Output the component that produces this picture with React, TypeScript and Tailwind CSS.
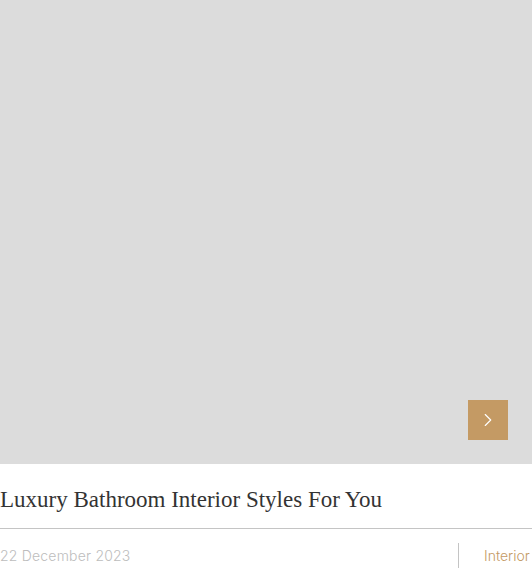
import { ChevronRight } from 'lucide-react';

const App = () => {
  return (
    <div className="w-[532px] h-[568px] overflow-hidden bg-white">
      <div className="relative h-[464px] bg-[#dcdcdc]">
        <button className="absolute right-[24px] bottom-[24px] w-[40px] h-[40px] bg-[#c49a64] flex items-center justify-center text-white">
          <ChevronRight size={22} strokeWidth={1.25} />
        </button>
      </div>

      <h2 className="pt-[22px] pb-[14px] border-b border-[#c4c4c4] text-[23px] leading-[28px] text-[#333] whitespace-nowrap" style={{ fontFamily: '"Liberation Serif", serif' }}>
        Luxury Bathroom Interior Styles For You
      </h2>

      <div className="flex items-start pt-[14px]" style={{ fontFamily: 'Inter, sans-serif' }}>
        <div className="flex-1 text-[14px] font-light tracking-[0.2px] leading-[26px] text-[#bdbdbd]">22 December 2023</div>
        <div className="w-[74px] h-[30px] border-l border-[#c4c4c4] pl-[25px] text-[14px] font-light leading-[26px] text-[#c49a64] whitespace-nowrap">
          Interior
        </div>
      </div>
    </div>
  );
};

export default App;
